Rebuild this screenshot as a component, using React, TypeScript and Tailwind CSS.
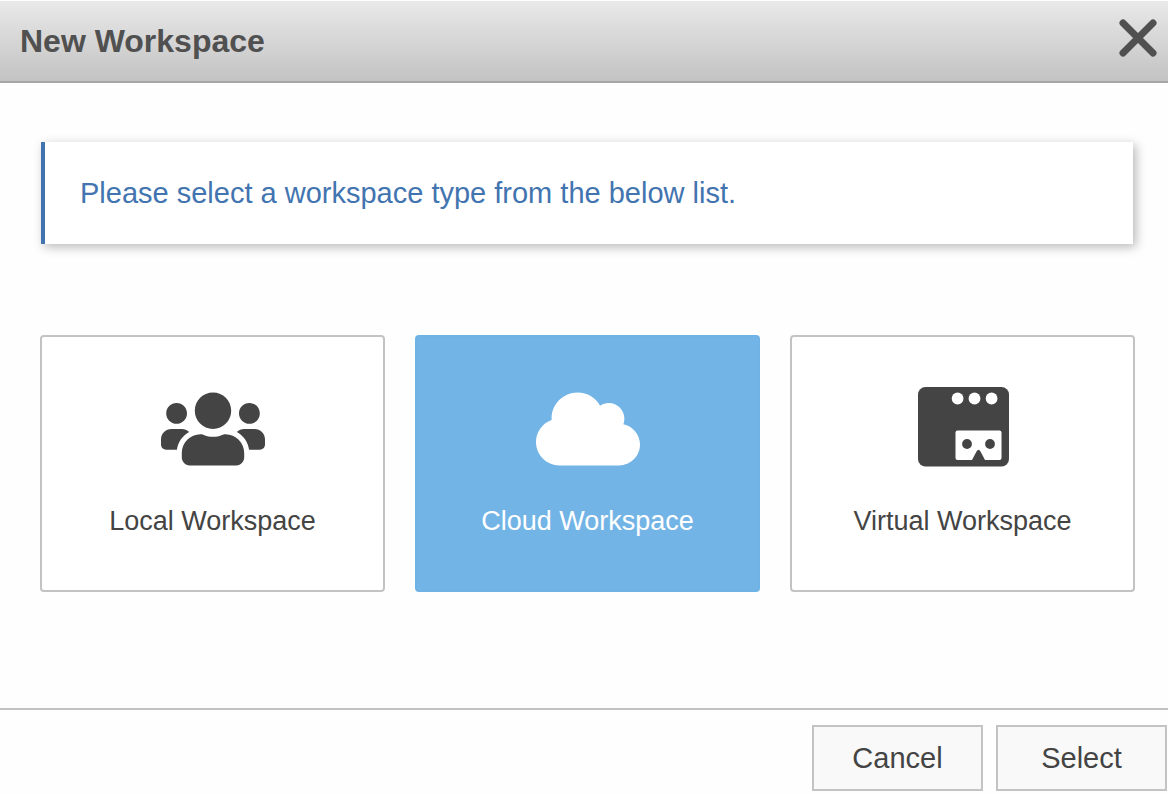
import { useState } from 'react';
import type { ReactNode } from 'react';
import { FaCloud, FaUsers } from 'react-icons/fa';

// ────────────────────────────────────────────────────────────────────────────
// Icons
// ────────────────────────────────────────────────────────────────────────────

function CloseIcon() {
  return (
    <svg viewBox="0 0 38 38" className="size-[38px]" fill="none" stroke="currentColor" strokeWidth="7" strokeLinecap="round" aria-hidden="true">
      <path d="M4 4 34 34M34 4 4 34" />
    </svg>
  );
}

// App window with a cardboard headset in the corner
function VirtualIcon() {
  return (
    <svg viewBox="0 0 104 84" className="h-[84px] w-[104px]" aria-hidden="true">
      <rect x="7" y="0" width="91" height="79.5" rx="7.5" fill="currentColor" />
      <circle cx="46.6" cy="11.5" r="5.9" fill="#fff" />
      <circle cx="63.5" cy="11.5" r="5.9" fill="#fff" />
      <circle cx="80.6" cy="11.5" r="5.9" fill="#fff" />
      <path
        d="M46.5 43.5H88.500Q90.500 43.500 90.500 45.500V71Q90.500 73 88.500 73H74L69.500 64.500Q67.500 61 65.500 64.500L61 73H46.500Q44.500 73 44.500 71V45.500Q44.500 43.500 46.500 43.500Z"
        fill="#fff"
      />
      <circle cx="56" cy="57" r="4.9" fill="currentColor" />
      <circle cx="79" cy="57" r="4.9" fill="currentColor" />
    </svg>
  );
}

// ────────────────────────────────────────────────────────────────────────────
// Workspace types
// ────────────────────────────────────────────────────────────────────────────

interface WorkspaceType {
  id: string;
  label: string;
  icon: ReactNode;
}

const WORKSPACE_TYPES: WorkspaceType[] = [
  { id: 'local', label: 'Local Workspace', icon: <FaUsers className="h-[84px] w-[104px]" /> },
  { id: 'cloud', label: 'Cloud Workspace', icon: <FaCloud className="h-[84px] w-[104px]" /> },
  { id: 'virtual', label: 'Virtual Workspace', icon: <VirtualIcon /> },
];

interface WorkspaceCardProps {
  type: WorkspaceType;
  selected: boolean;
  onSelect: () => void;
}

function WorkspaceCard({ type, selected, onSelect }: WorkspaceCardProps) {
  return (
    <button
      type="button"
      aria-pressed={selected}
      onClick={onSelect}
      className={`flex flex-col items-center gap-[34px] rounded-sm border-2 pt-[50px] pb-[53px] text-[27px] leading-8 ${
        selected ? 'border-[#6fb2e6] bg-[#73b4e6] text-white' : 'border-[#c3c3c3] bg-white text-[#444]'
      }`}
    >
      {type.icon}
      <span>{type.label}</span>
    </button>
  );
}

function DialogButton({ children }: { children: ReactNode }) {
  return (
    <button
      type="button"
      className="h-[66px] w-[171px] border-2 border-[#c3c3c3] bg-[#f9f9f9] text-[29px] leading-8 text-[#444] hover:bg-[#f0f0f0]"
    >
      {children}
    </button>
  );
}

// ────────────────────────────────────────────────────────────────────────────
// Dialog
// ────────────────────────────────────────────────────────────────────────────

export default function App() {
  const [selected, setSelected] = useState('cloud');

  return (
    <div
      role="dialog"
      aria-labelledby="dialog-title"
      className="flex min-h-screen flex-col bg-[#fefefe] font-['Liberation_Sans',Arial,sans-serif]"
    >
      <header className="mt-px flex h-[82px] items-start justify-between border-b-2 border-[#a6a6a6] bg-linear-to-b from-[#e9e9e9] to-[#c3c3c3] pt-[18px] pr-[11px] pl-5">
        <h1 id="dialog-title" className="pt-1 text-[32px] leading-9 font-bold text-[#505050]">
          New Workspace
        </h1>
        <button type="button" aria-label="Close" className="text-[#505050] hover:text-black">
          <CloseIcon />
        </button>
      </header>

      <main className="flex-1 pt-[59px] pr-[33px] pb-10 pl-10">
        <p className="mr-0.5 ml-px border-l-4 border-[#4274b0] bg-white py-[33px] pl-[35px] text-[29px] leading-9 text-[#4274b0] shadow-[3px_3px_10px_rgba(0,0,0,0.28)]">
          Please select a workspace type from the below list.
        </p>

        <div className="mt-[91px] grid grid-cols-3 gap-[30px]">
          {WORKSPACE_TYPES.map((type) => (
            <WorkspaceCard
              key={type.id}
              type={type}
              selected={selected === type.id}
              onSelect={() => setSelected(type.id)}
            />
          ))}
        </div>
      </main>

      <footer className="flex justify-end gap-[13px] border-t-2 border-[#c3c3c3] pt-[15px] pr-px pb-[3px]">
        <DialogButton>Cancel</DialogButton>
        <DialogButton>Select</DialogButton>
      </footer>
    </div>
  );
}
